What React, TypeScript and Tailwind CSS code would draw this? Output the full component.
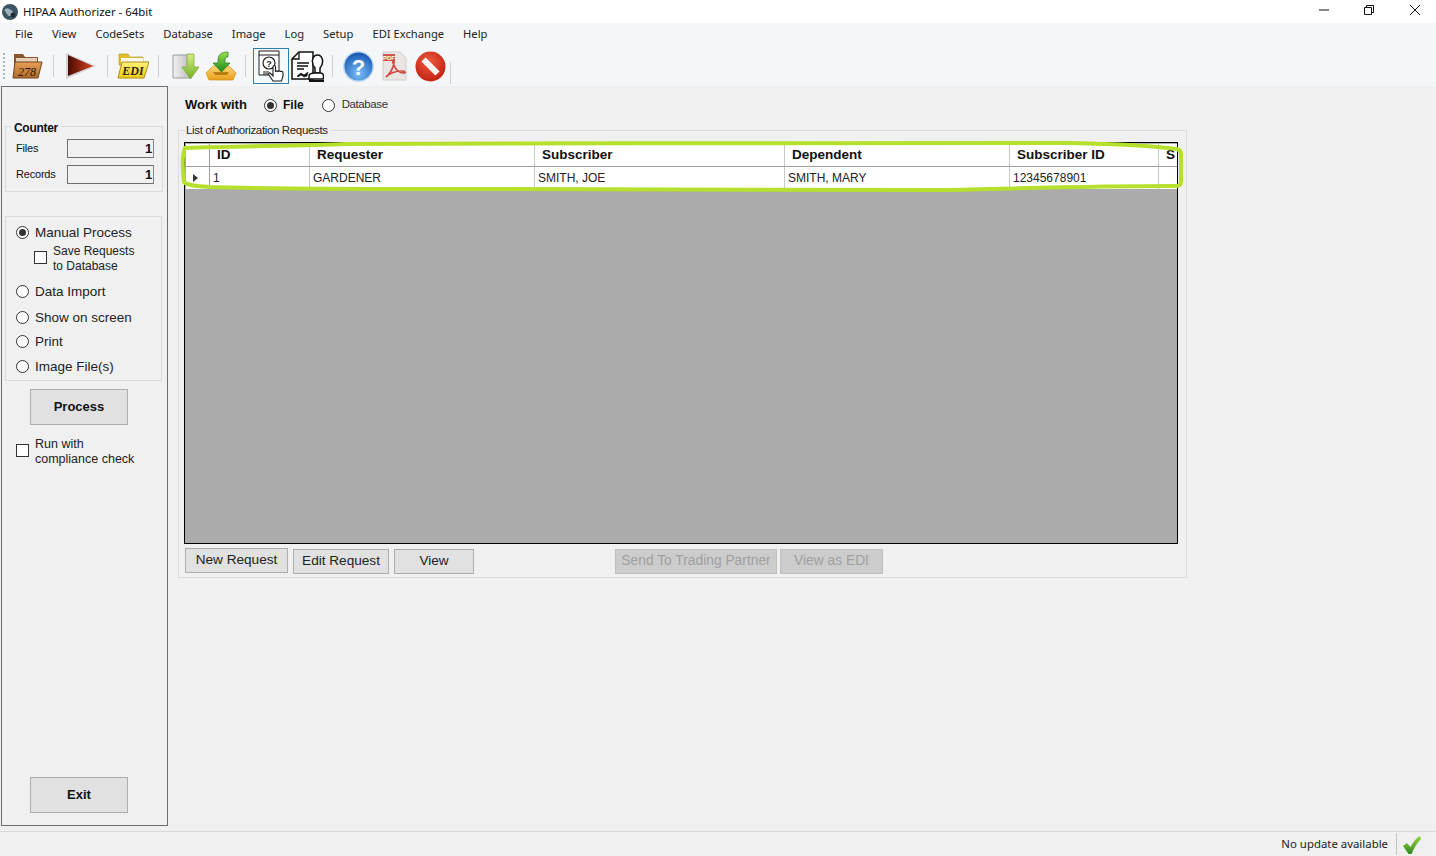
const menus = ['File', 'View', 'CodeSets', 'Database', 'Image', 'Log', 'Setup', 'EDI Exchange', 'Help'];

const columns = [
  { title: 'ID', value: '1', width: 'w-[100px]' },
  { title: 'Requester', value: 'GARDENER', width: 'w-[225px]' },
  { title: 'Subscriber', value: 'SMITH, JOE', width: 'w-[250px]' },
  { title: 'Dependent', value: 'SMITH, MARY', width: 'w-[225px]' },
  { title: 'Subscriber ID', value: '12345678901', width: 'w-[149px]' },
];

function Sep({ className }: { className: string }) {
  return <div className={`w-px h-[22px] bg-[#cfcfcf] ${className}`} />;
}

function Folder278() {
  return (
    <svg width="31" height="26" viewBox="0 0 31 26">
      <defs>
        <linearGradient id="f278" x1="0" y1="0" x2="0" y2="1">
          <stop offset="0" stopColor="#e8a057" />
          <stop offset="1" stopColor="#b06a2c" />
        </linearGradient>
      </defs>
      <path d="M2 1h9l2 3h13v8H2z" fill="#8a5528" />
      <path d="M4 5h21v5H4z" fill="#e3cfb6" />
      <path d="M3 9h27l-4 16H1z" fill="url(#f278)" stroke="#70431c" strokeWidth="1" />
      <text x="15" y="22.500" textAnchor="middle" fontSize="12" fontStyle="italic" fontFamily="Liberation Serif, serif" fill="#2a1608">278</text>
    </svg>
  );
}

function Play() {
  return (
    <svg width="31" height="26" viewBox="0 0 31 26">
      <defs>
        <linearGradient id="playG" x1="0" y1="0" x2="1" y2="0">
          <stop offset="0" stopColor="#4a0c04" />
          <stop offset="1" stopColor="#d8401e" />
        </linearGradient>
      </defs>
      <path d="M1 0l30 13L1 26z" fill="#d2d2d2" />
      <path d="M3 2l25 11L3 23z" fill="url(#playG)" />
    </svg>
  );
}

function FolderEdi() {
  return (
    <svg width="32" height="26" viewBox="0 0 32 26">
      <defs>
        <linearGradient id="fEdi" x1="0" y1="0" x2="0" y2="1">
          <stop offset="0" stopColor="#fff27a" />
          <stop offset="1" stopColor="#f0cc14" />
        </linearGradient>
      </defs>
      <path d="M2 1h9l2 3h13v8H2z" fill="#e0c030" stroke="#b3931a" strokeWidth="0.6" />
      <path d="M4 5h22v5H4z" fill="#fffdf0" />
      <path d="M5 9h27l-5 16H1z" fill="url(#fEdi)" stroke="#a98c14" strokeWidth="1" />
      <text x="16" y="22" textAnchor="middle" fontSize="12" fontWeight="700" fontStyle="italic" fontFamily="Liberation Serif, serif" fill="#2b2405">EDI</text>
    </svg>
  );
}

function DocArrow() {
  return (
    <svg width="28" height="28" viewBox="0 0 28 28">
      <defs>
        <linearGradient id="docG" x1="0" y1="0" x2="1" y2="0">
          <stop offset="0" stopColor="#f3f3f3" />
          <stop offset="1" stopColor="#b9b9b9" />
        </linearGradient>
        <linearGradient id="arrG" x1="0" y1="0" x2="0" y2="1">
          <stop offset="0" stopColor="#d8ee8c" />
          <stop offset="1" stopColor="#6fae1f" />
        </linearGradient>
      </defs>
      <path d="M1 3h18v23H1z" fill="url(#docG)" stroke="#9c9c9c" strokeWidth="1" />
      <path d="M15 2h7v13h5l-8.500 12L10 15h5z" fill="url(#arrG)" stroke="#7ea83a" strokeWidth="0.8" />
    </svg>
  );
}

function TrayArrow() {
  return (
    <svg width="32" height="30" viewBox="0 0 32 30">
      <defs>
        <linearGradient id="trayG" x1="0" y1="0" x2="0" y2="1">
          <stop offset="0" stopColor="#ffd878" />
          <stop offset="1" stopColor="#e89e1a" />
        </linearGradient>
        <linearGradient id="trayA" x1="0" y1="0" x2="0" y2="1">
          <stop offset="0" stopColor="#9be04a" />
          <stop offset="1" stopColor="#1c8a1e" />
        </linearGradient>
      </defs>
      <path d="M1 22l7-7h16l7 7-3 7H4z" fill="url(#trayG)" stroke="#cf9420" strokeWidth="0.7" />
      <path d="M8 21h16l-2 3H10z" fill="#b97d12" />
      <path d="M23 1c-7 0-10 3-10 8v3H8l8.500 9L25 12h-5v-3c0-2 1-3 3-3z" fill="url(#trayA)" stroke="#1f7a22" strokeWidth="0.7" />
    </svg>
  );
}

function HelpHand() {
  return (
    <svg width="28" height="32" viewBox="0 0 28 32" fill="none" stroke="#1c1c1c">
      <path d="M2 1h20v24H2z" fill="#fff" strokeWidth="1" />
      <path d="M2 5h20" strokeWidth="1" />
      <circle cx="12" cy="13" r="6" strokeWidth="1.200" />
      <text x="12" y="16.500" textAnchor="middle" fontSize="9" fontWeight="700" fontFamily="Liberation Sans, sans-serif" fill="#1c1c1c" stroke="none">?</text>
      <path d="M6 22h6M6 24h6" strokeWidth="1" />
      <path d="M16 31l-4-6c-1-2 1-3 2-1l2 2v-9c0-2 2.500-2 2.500 0v5c0-1.500 2.500-1.500 2.500 0 0-1.500 2.500-1.500 2.500 0 0-1 2.500-1 2.500 1v3l-1.500 5z" fill="#fff" strokeWidth="1.100" />
    </svg>
  );
}

function Contract() {
  return (
    <svg width="33" height="33" viewBox="0 0 33 33" fill="none" stroke="#111">
      <path d="M1 9l7-7h14v27H1z" fill="#fff" strokeWidth="1.500" />
      <path d="M1 9h7V2" strokeWidth="1.300" />
      <path d="M6 13h12M6 16h11M6 19h7" strokeWidth="1.300" />
      <path d="M6 26l4-3 3 2 4-3-1 4-3 1-3-2-3 2z" fill="#111" strokeWidth="0.6" />
      <path d="M24 18c-5-6-2-13 2.500-13s7.500 7 2.500 13v5h-5z" fill="#fff" strokeWidth="1.500" />
      <path d="M18 26c0-3 3-3 6-3h5c3 0 3.500 1 3.500 3v3H18z" fill="#fff" strokeWidth="1.500" />
      <path d="M18 31h15" strokeWidth="2" />
    </svg>
  );
}

function HelpBall() {
  return (
    <svg width="31" height="31" viewBox="0 0 31 31">
      <defs>
        <radialGradient id="helpG" cx="0.5" cy="0.75" r="0.75">
          <stop offset="0" stopColor="#7cc0f5" />
          <stop offset="1" stopColor="#1556b4" />
        </radialGradient>
      </defs>
      <circle cx="15.500" cy="15.500" r="15.500" fill="#c4daf1" />
      <circle cx="15.500" cy="15.500" r="14" fill="url(#helpG)" />
      <text x="15.500" y="23.500" textAnchor="middle" fontSize="22" fontWeight="700" fontFamily="Liberation Sans, sans-serif" fill="#fff">?</text>
    </svg>
  );
}

function PdfDoc() {
  return (
    <svg width="25" height="30" viewBox="0 0 25 30">
      <path d="M1 1h17l6 6v22H1z" fill="#e9e5e3" stroke="#cfcfcf" strokeWidth="1" />
      <path d="M1 3h12v7H1z" fill="#c9574f" />
      <text x="7" y="9" textAnchor="middle" fontSize="6" fontWeight="700" fontFamily="Liberation Sans, sans-serif" fill="#fff">PDF</text>
      <path d="M4 26c4-3 8-10 8-15 0-3-2-2-1 1 2 6 6 10 11 10 2 0 1-2-2-2-5 0-12 2-16 6z" fill="none" stroke="#d0483f" strokeWidth="1.700" />
    </svg>
  );
}

function Stop() {
  return (
    <svg width="31" height="31" viewBox="0 0 31 31">
      <defs>
        <radialGradient id="stopG" cx="0.45" cy="0.35" r="0.8">
          <stop offset="0" stopColor="#ee5a3c" />
          <stop offset="1" stopColor="#b8160b" />
        </radialGradient>
      </defs>
      <circle cx="15.500" cy="15.500" r="15" fill="url(#stopG)" />
      <path d="M8.500 8.500l14 14" stroke="#fbf4f0" strokeWidth="6" />
    </svg>
  );
}

function Radio({ checked, className = '' }: { checked?: boolean; className?: string }) {
  return (
    <span className={`w-[13px] h-[13px] rounded-full border border-[#333] bg-white flex items-center justify-center shrink-0 ${className}`}>
      {checked && <span className="w-[7px] h-[7px] rounded-full bg-[#333]" />}
    </span>
  );
}

function CheckBox({ className = '' }: { className?: string }) {
  return <span className={`w-[13px] h-[13px] border border-[#333] bg-white shrink-0 ${className}`} />;
}

function OptionRow({ label, checked, className }: { label: string; checked?: boolean; className: string }) {
  return (
    <div className={`flex items-center ml-[10px] h-[16px] text-[13.500px] text-[#222] ${className}`}>
      <Radio checked={checked} className="-mt-[2px]" />
      <span className="ml-[6px]">{label}</span>
    </div>
  );
}

function SideButton({ label, className }: { label: string; className: string }) {
  return (
    <button className={`ml-[28px] w-[98px] h-[36px] bg-[#e1e1e1] border border-[#adadad] font-bold text-[13px] text-[#111] ${className}`}>
      {label}
    </button>
  );
}

function ActionButton({ label, width, disabled }: { label: string; width: string; disabled?: boolean }) {
  return (
    <button
      className={`h-[25px] border ${width} ${
        disabled ? 'bg-[#cccccc] border-[#bfbfbf] text-[#a0a0a0] text-[13.800px]' : 'bg-[#e1e1e1] border-[#adadad] text-[#222] text-[13.600px]'
      }`}
    >
      {label}
    </button>
  );
}

export default function App() {
  return (
    <div className="w-[1436px] h-[856px] overflow-hidden flex flex-col bg-[#f0f0f0] font-['Liberation_Sans',Arial,sans-serif] text-[#111]">
      {/* Title bar */}
      <div className="h-[23px] bg-white flex items-center shrink-0">
        <svg className="ml-[2px]" width="16" height="16" viewBox="0 0 16 16">
          <circle cx="8" cy="8" r="8" fill="#3e5563" />
          <path d="M3 5c3-2 4 0 6 1s3 3 1 5-4 1-5-1-3-3-2-5z" fill="#9db2bf" />
          <circle cx="11" cy="11" r="2.500" fill="#1f2e38" />
        </svg>
        <span className="ml-[5px] text-[11.400px] font-['Noto_Sans',sans-serif] text-[#111]">HIPAA Authorizer - 64bit</span>
        <div className="ml-auto -mt-[3px] flex items-center">
          <svg width="12" height="12" viewBox="0 0 12 12" className="mr-[33px]">
            <path d="M1 6h10" stroke="#111" strokeWidth="1" />
          </svg>
          <svg width="12" height="12" viewBox="0 0 12 12" className="mr-[34px]" fill="none" stroke="#111" strokeWidth="1">
            <path d="M1.500 3.500h7v7h-7zM3.500 3.500v-2h7v7h-2" />
          </svg>
          <svg width="12" height="12" viewBox="0 0 12 12" className="mr-[15px]" fill="none" stroke="#111" strokeWidth="1">
            <path d="M1 1l10 10M11 1L1 11" />
          </svg>
        </div>
      </div>

      {/* Menu */}
      <div className="h-[23px] bg-[#f5f6f7] flex items-center gap-[19px] pl-[15px] shrink-0 text-[11.200px] font-['Noto_Sans',sans-serif] text-[#222]">
        {menus.map((m) => (
          <span key={m}>{m}</span>
        ))}
      </div>

      {/* Toolbar */}
      <div className="h-[40px] bg-[#f5f6f7] flex items-center shrink-0 pl-[3px]">
        <div className="w-[3px] h-[26px] border-l-2 border-dotted border-[#b5b5b5]" />
        <div className="ml-[6px] w-[31px]"><Folder278 /></div>
        <Sep className="ml-[10px]" />
        <div className="ml-[11px] w-[31px]"><Play /></div>
        <Sep className="ml-[11px]" />
        <div className="ml-[9px] w-[32px]"><FolderEdi /></div>
        <Sep className="ml-[9px]" />
        <div className="ml-[13px] w-[28px]"><DocArrow /></div>
        <div className="ml-[5px] w-[32px]"><TrayArrow /></div>
        <Sep className="ml-[8px]" />
        <div className="ml-[7px] w-[36px] h-[36px] border border-[#2e7dab] bg-[#f3f8fb] flex items-center justify-center"><HelpHand /></div>
        <div className="ml-[2px] w-[33px]"><Contract /></div>
        <Sep className="ml-[8px]" />
        <div className="ml-[10px] w-[31px]"><HelpBall /></div>
        <div className="ml-[8px] w-[25px]"><PdfDoc /></div>
        <div className="ml-[8px] w-[31px]"><Stop /></div>
        <Sep className="ml-[4px] mt-[14px]" />
      </div>

      {/* Body */}
      <div className="flex-1 flex min-h-0">
        {/* Sidebar */}
        <div className="ml-[1px] w-[167px] h-[740px] border border-[#6e6e6e] flex flex-col shrink-0">
          <div className="ml-[3px] mt-[39px] w-[158px] h-[66px] border border-[#dcdcdc]">
            <div className="ml-[5px] -mt-[6px] w-fit bg-[#f0f0f0] px-[3px] font-bold text-[12px] leading-[14px] tracking-[-0.3px]">Counter</div>
            <div className="flex items-center mt-[4px] ml-[10px] text-[11px] tracking-[-0.2px]">
              <span className="w-[51px]">Files</span>
              <span className="w-[87px] h-[19px] border border-[#6e6e6e] border-r-[#888] bg-[#f0f0f0] text-right pr-px font-bold text-[13px] leading-[17px]">1</span>
            </div>
            <div className="flex items-center mt-[7px] ml-[10px] text-[11px] tracking-[-0.2px]">
              <span className="w-[51px]">Records</span>
              <span className="w-[87px] h-[19px] border border-[#6e6e6e] border-r-[#888] bg-[#f0f0f0] text-right pr-px font-bold text-[13px] leading-[17px]">1</span>
            </div>
          </div>

          <div className="ml-[3px] mt-[24px] w-[157px] h-[165px] border border-[#dcdcdc]">
            <OptionRow label="Manual Process" checked className="mt-[8px]" />
            <div className="flex items-center ml-[28px] mt-[3px] text-[12px] leading-[15px] text-[#222]">
              <CheckBox className="-mt-[4px]" />
              <span className="ml-[6px]">Save Requests<br />to Database</span>
            </div>
            <OptionRow label="Data Import" className="mt-[10px]" />
            <OptionRow label="Show on screen" className="mt-[10px]" />
            <OptionRow label="Print" className="mt-[8px]" />
            <OptionRow label="Image File(s)" className="mt-[9px]" />
          </div>

          <SideButton label="Process" className="mt-[8px]" />

          <div className="flex items-center ml-[14px] mt-[12px] text-[12.500px] leading-[15px] text-[#222]">
            <CheckBox className="-mt-[4px]" />
            <span className="ml-[6px]">Run with<br />compliance check</span>
          </div>

          <SideButton label="Exit" className="mt-auto mb-[12px]" />
        </div>

        {/* Main */}
        <div className="ml-[10px] flex flex-col">
          <div className="flex items-center h-[18px] mt-[10px] ml-[7px] text-[12px]">
            <span className="font-bold text-[13px] w-[79px]">Work with</span>
            <Radio checked />
            <span className="ml-[6px] font-bold">File</span>
            <Radio className="ml-[18px]" />
            <span className="ml-[7px] text-[#333] text-[11.500px] tracking-[-0.4px]">Database</span>
          </div>

          <div className="relative mt-[16px] w-[1009px] h-[448px] border border-[#dcdcdc] px-[5px]">
            <div className="-mt-[8px] ml-[2px] w-fit bg-[#f0f0f0] pr-[2px] text-[11.500px] leading-[14px] tracking-[-0.35px] text-[#222]">List of Authorization Requests</div>

            <div className="mt-[5px] w-[994px] h-[402px] border border-black bg-[#ababab]">
              <div className="mt-[1px] ml-[1px] w-[991px] bg-white">
                <div className="flex h-[23px] border-b border-[#a0a0a0] text-[13.500px] font-bold leading-[22px]">
                  <div className="w-[24px] border-r border-[#a0a0a0]" />
                  {columns.map((c) => (
                    <div key={c.title} className={`${c.width} border-r border-[#c8c8c8] pl-[7px]`}>{c.title}</div>
                  ))}
                  <div className="flex-1 pl-[7px]">S</div>
                </div>
                <div className="flex h-[22px] text-[12px] leading-[22px] text-[#222]">
                  <div className="w-[24px] border-r border-[#a0a0a0] flex items-center pl-[7px]">
                    <span className="w-0 h-0 border-y-[4px] border-y-transparent border-l-[5px] border-l-[#333]" />
                  </div>
                  {columns.map((c) => (
                    <div key={c.title} className={`${c.width} border-r border-[#c8c8c8] pl-[3px]`}>{c.value}</div>
                  ))}
                  <div className="flex-1" />
                </div>
              </div>
            </div>

            <div className="flex mt-[4px] ml-px">
              <ActionButton label="New Request" width="w-[103px]" />
              <div className="ml-[5px]"><ActionButton label="Edit Request" width="w-[96px]" /></div>
              <div className="ml-[5px]"><ActionButton label="View" width="w-[80px]" /></div>
              <div className="ml-[141px]"><ActionButton label="Send To Trading Partner" width="w-[162px]" disabled /></div>
              <div className="ml-[3px]"><ActionButton label="View as EDI" width="w-[103px]" disabled /></div>
            </div>

            {/* hand drawn highlight round the first rows */}
            <svg className="absolute left-[0px] top-[4px] pointer-events-none" width="1009" height="58" viewBox="0 0 1009 58" fill="none">
              <path
                d="M6 13C60 11 130 11 166 9C400 8 700 8 892 8C940 9 975 11 998 14C1001 15 1002 17 1002 19L1002 47C1002 50 1000 51 996 51C900 51 830 54 760 55C600 55 400 54 280 54C180 54 90 54 30 52C15 51 8 50 5 47C3 30 3 20 6 13Z"
                stroke="#b6e02c"
                strokeWidth="4"
              />
            </svg>
          </div>
        </div>
      </div>

      {/* Status bar */}
      <div className="h-[25px] shrink-0 border-t border-[#d9d9d9] flex items-center justify-end text-[11.400px] font-['Noto_Sans',sans-serif] text-[#222]">
        <span>No update available</span>
        <div className="ml-[8px] w-px h-[22px] bg-[#c4c4c4]" />
        <svg className="ml-[5px] mr-[14px] mt-[2px]" width="20" height="19" viewBox="0 0 20 19">
          <defs>
            <linearGradient id="okG" x1="0" y1="0" x2="0" y2="1">
              <stop offset="0" stopColor="#9bd640" />
              <stop offset="1" stopColor="#2f8a1e" />
            </linearGradient>
          </defs>
          <path d="M1 10L5 7L8.500 11C11 6 14 2 18 0L19 3C15 7 12 12 9.500 18L6.500 18Z" fill="url(#okG)" />
        </svg>
      </div>
    </div>
  );
}
